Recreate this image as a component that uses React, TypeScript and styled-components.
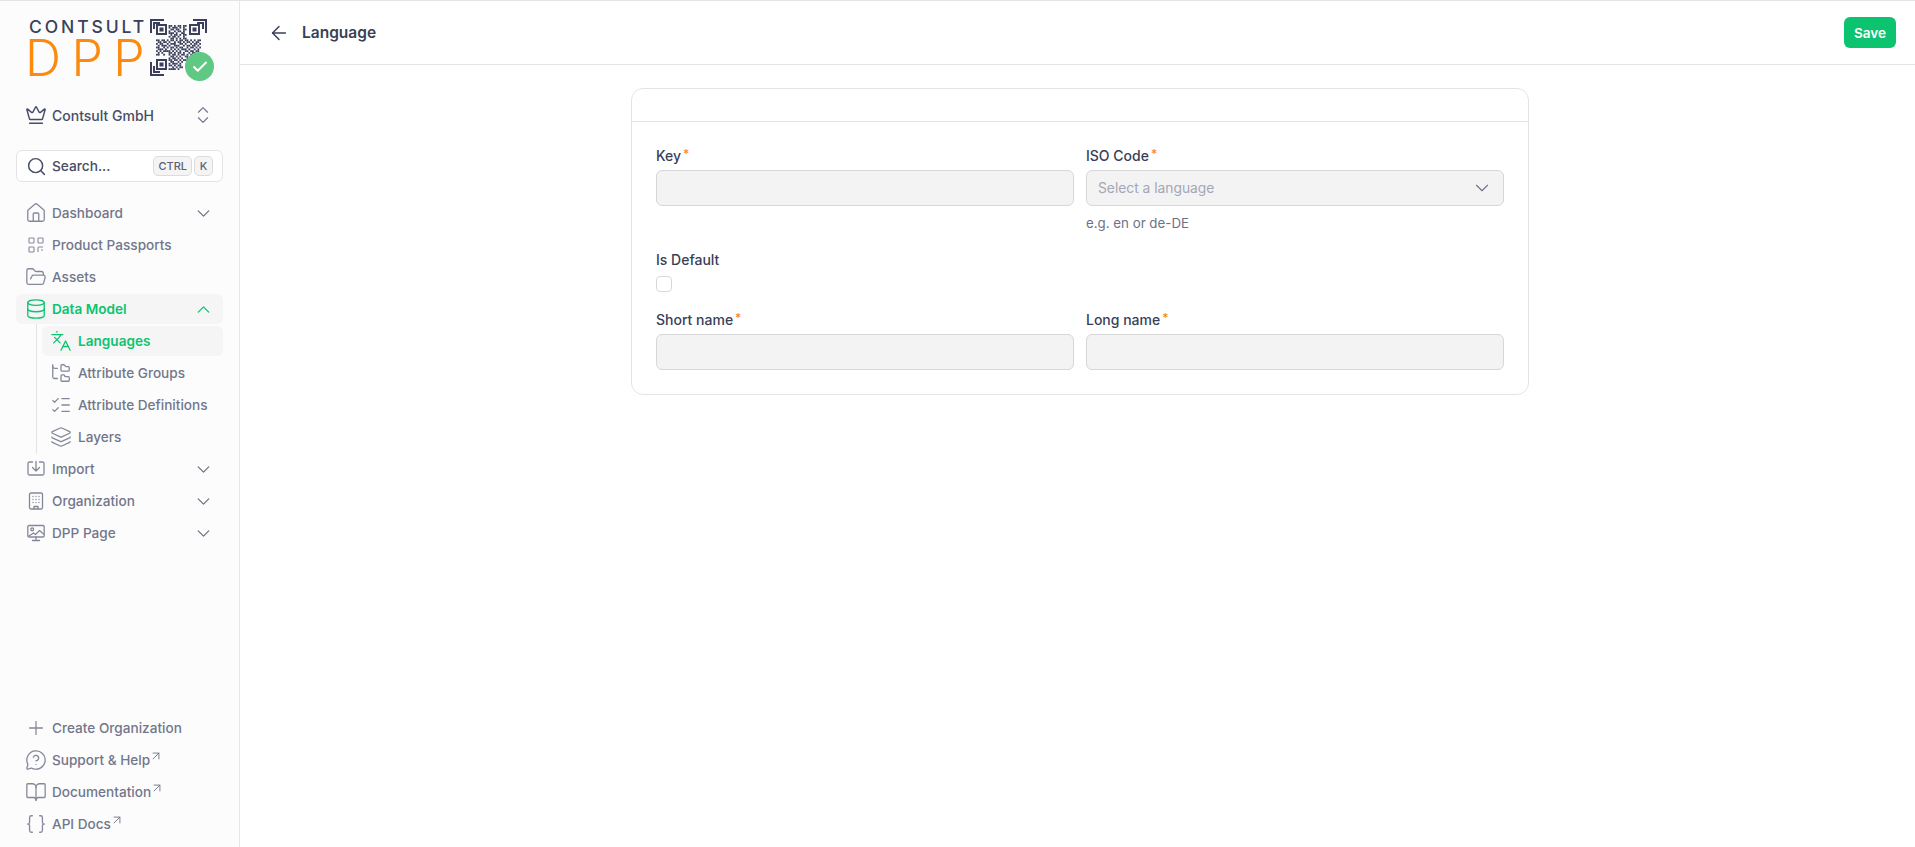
import React from 'react';
import styled, {createGlobalStyle} from 'styled-components';
import {
  ArrowLeft,
  ArrowUpRight,
  BookOpen,
  Braces,
  Check,
  ChevronDown,
  ChevronUp,
  ChevronsUpDown,
  Crown,
  Database,
  FolderOpen,
  FolderTree,
  House,
  Languages,
  Layers,
  ListChecks,
  MessageCircleQuestion,
  Plus,
  Search,
} from 'lucide-react';

const GlobalStyle = createGlobalStyle`
  html, body, #root {
    margin: 0;
    height: 100%;
  }
  body {
    font-family: 'Inter', 'Liberation Sans', sans-serif;
    color: #383f58;
    background: #fff;
  }
  * {
    box-sizing: border-box;
  }
`;

const Shell = styled.div`
  display: flex;
  height: 847px;
  border-top: 1px solid #e4e4e7;
  overflow: hidden;
`;

const Sidebar = styled.aside`
  width: 240px;
  flex-shrink: 0;
  display: flex;
  flex-direction: column;
  background: #fcfcfc;
  border-right: 1px solid #e6e6e8;
  padding: 0 16px;
`;

const Logo = styled.div`
  position: relative;
  display: flex;
  gap: 4px;
  height: 76px;
  margin: 18px 0 0 13px;
`;

const LogoWords = styled.div`
  display: flex;
  flex-direction: column;
  width: 117px;
`;

const LogoTop = styled.span`
  font-family: 'Inter', sans-serif;
  font-size: 17.5px;
  line-height: 16px;
  font-weight: 500;
  letter-spacing: 2.9px;
  color: #3b3f5c;
  white-space: nowrap;
`;

const LogoBottom = styled.span`
  margin-left: -4px;
  font-family: 'Inter', sans-serif;
  font-size: 50px;
  line-height: 47px;
  font-weight: 300;
  letter-spacing: 10.5px;
  color: #fb8a0f;
  white-space: nowrap;
`;

const Badge = styled.div`
  position: absolute;
  left: 156px;
  top: 33px;
  width: 29px;
  height: 29px;
  border-radius: 50%;
  background: #5fc883;
  color: #fff;
  display: flex;
  align-items: center;
  justify-content: center;
`;

// every icon sits in an 18px box, lucide glyphs are drawn a bit over it
const Ic = styled.span`
  width: 18px;
  height: 18px;
  flex-shrink: 0;
  display: flex;
  align-items: center;
  justify-content: center;

  svg {
    flex-shrink: 0;
  }
`;

const OrgRow = styled.div`
  display: flex;
  align-items: center;
  gap: 7px;
  height: 30px;
  margin-top: 5px;
  padding: 0 11px;
  font-size: 14px;
  font-weight: 500;
  color: #474d66;
`;

const Grow = styled.span`
  flex: 1;
`;

const SearchBox = styled.div`
  display: flex;
  align-items: center;
  gap: 7px;
  height: 32px;
  margin-top: 20px;
  padding: 0 9px 0 10px;
  border: 1px solid #e4e4e7;
  border-radius: 6px;
  background: #fff;
  font-size: 13.7px;
  font-weight: 500;
  color: #474d66;
`;

const Kbd = styled.kbd`
  height: 20px;
  min-width: 19px;
  padding: 0 4px;
  text-align: center;
  border: 1px solid #dcdce0;
  border-radius: 5px;
  background: #f4f4f5;
  font-family: 'Inter', sans-serif;
  font-size: 11px;
  line-height: 18px;
  font-weight: 500;
  color: #5b6074;

  & + & {
    margin-left: -5px;
  }
`;

const Nav = styled.nav`
  display: flex;
  flex-direction: column;
  gap: 2px;
  margin-top: 16px;
`;

const Spacer = styled.div`
  flex: 1;
`;

const Bottom = styled(Nav)`
  margin: 0 0 8px;
`;

const Item = styled.div<{$active?: boolean}>`
  display: flex;
  align-items: center;
  gap: 7px;
  height: 30px;
  flex-shrink: 0;
  padding: 0 11px;
  border-radius: 6px;
  font-size: 13.6px;
  font-weight: ${(p) => (p.$active ? 600 : 500)};
  color: ${(p) => (p.$active ? '#0cc36f' : '#72768b')};
  background: ${(p) => (p.$active ? '#f5f5f5' : 'transparent')};
  white-space: nowrap;

  ${Ic} {
    color: ${(p) => (p.$active ? '#0cc36f' : '#85889a')};
  }
`;

const SubList = styled.div`
  position: relative;
  display: flex;
  flex-direction: column;
  gap: 2px;
  margin-left: 20px;
  padding-left: 6px;

  &::before {
    content: '';
    position: absolute;
    left: 0;
    top: -2px;
    bottom: -2px;
    width: 1px;
    background: #e4e4e7;
  }

  ${Item} {
    padding: 0 9px 0 10px;
    gap: 8px;
  }
`;

const Up = styled(ArrowUpRight)`
  margin: -9px 0 0 -8px;
`;

const Main = styled.main`
  flex: 1;
  min-width: 0;
  display: flex;
  flex-direction: column;
`;

const Header = styled.header`
  display: flex;
  align-items: center;
  height: 64px;
  padding: 0 19px 0 30px;
  border-bottom: 1px solid #e4e4e7;
`;

const Title = styled.h1`
  margin: 0 0 0 14px;
  font-size: 15.5px;
  line-height: 20px;
  font-weight: 600;
  color: #383f58;
`;

const SaveButton = styled.button`
  width: 52px;
  height: 31px;
  padding: 0;
  border: none;
  border-radius: 6px;
  background: #0cc36f;
  color: #fff;
  font-family: inherit;
  font-size: 13.6px;
  font-weight: 600;
`;

const Card = styled.section`
  width: 898px;
  margin: 23px 0 0 391px;
  border: 1px solid #e4e4e7;
  border-radius: 12px;
  background: #fff;
`;

const CardHead = styled.div`
  height: 33px;
  border-bottom: 1px solid #e4e4e7;
`;

const Form = styled.div`
  display: grid;
  grid-template-columns: 418px 418px;
  column-gap: 12px;
  padding: 24px;
`;

const Field = styled.div<{$height: number}>`
  display: flex;
  flex-direction: column;
  height: ${(p) => p.$height}px;
`;

const Label = styled.label`
  height: 19px;
  margin-bottom: 5px;
  display: flex;
  font-size: 14px;
  line-height: 19px;
  font-weight: 500;
  color: #383f58;
`;

const Star = styled.span`
  margin-left: 2px;
  font-size: 12px;
  line-height: 15px;
  color: #fb8a0f;
`;

const Input = styled.div`
  height: 36px;
  flex-shrink: 0;
  display: flex;
  align-items: center;
  justify-content: space-between;
  padding: 0 12px 0 11px;
  border: 1px solid #d7d7da;
  border-radius: 6px;
  background: #f3f3f3;
  font-size: 13.8px;
  color: #a4a7b4;
`;

const Help = styled.div`
  margin-top: 8px;
  font-size: 13.3px;
  line-height: 18px;
  color: #6e7287;
`;

const CheckBox = styled.div`
  width: 16px;
  height: 16px;
  margin-top: 2px;
  border: 1px solid #d7d7da;
  border-radius: 4px;
  background: #fff;
`;

// qr modules, 1 = dark, drawn in a 25x25 grid between the corner frames
const qrRows = [
  '0000000110101101100000000',
  '0000000101110101000000000',
  '0000000011011001100000000',
  '0000000100101101000000000',
  '0000000111010011000000000',
  '0000000010110101100000000',
  '0000000101101001000000000',
  '0000000011010101100000000',
  '1101101011010110110101011',
  '0110110100101101011010110',
  '1011001011100110100101101',
  '0101110100111001011011010',
  '1100101011010110010110101',
  '0111010010101011101001010',
  '1010111101010100110110110',
  '0101000110101101001011001',
  '1100100101101011010100000',
  '0000000011010100110000000',
  '0000000101101010010000000',
  '0000000110110101100000000',
  '0000000011001010000000000',
  '0000000101110100000000000',
  '0000000110101100000000000',
  '0000000001010110000000000',
  '0000000111101000000000000',
];

const QrFinder = ({x, y}: {x: number; y: number}) => (
  <>
    <rect x={x + 7} y={y + 6} width={9} height={9} fill="none" stroke="#3b3f5c" strokeWidth="2" />
    <rect x={x + 9.5} y={y + 8.5} width={4} height={4} fill="#3b3f5c" />
  </>
);

const QrLogo = () => (
  <svg width="57" height="57" viewBox="0 0 57 57">
    <path
      d="M1 14V1h13M43 1h13v13M1 43v13h13M4 10V4h6M47 4h6v6M4 47v6h6"
      fill="none"
      stroke="#3b3f5c"
      strokeWidth="2"
    />
    <QrFinder x={0} y={0} />
    <QrFinder x={33} y={0} />
    <QrFinder x={0} y={35} />
    {qrRows.map((row, r) =>
      row.split('').map((cell, c) =>
        cell === '1' ? <rect key={`${r}-${c}`} x={6 + c * 1.8} y={6 + r * 1.8} width={1.8} height={1.8} fill="#3b3f5c" /> : null
      )
    )}
  </svg>
);

const ScanIcon = () => (
  <svg width="18" height="18" viewBox="0 0 18 18" fill="none" stroke="currentColor" strokeWidth="1.1">
    <rect x="2" y="2" width="5" height="5" rx="0.8" />
    <rect x="11" y="2" width="5" height="5" rx="0.8" />
    <rect x="2" y="11" width="5" height="5" rx="0.8" />
    <path d="M11 16v-4a1 1 0 0 1 1-1h4M14 14h2M16 16.4v.1M13.6 16.4v.1" />
  </svg>
);

const ImportIcon = () => (
  <svg width="18" height="18" viewBox="0 0 18 18" fill="none" stroke="currentColor" strokeWidth="1.3" strokeLinecap="round" strokeLinejoin="round">
    <path d="M5.500 2H2.500A1.500 1.500 0 0 0 1 3.500v10A1.500 1.500 0 0 0 2.500 15h13a1.500 1.500 0 0 0 1.500-1.500v-10A1.500 1.500 0 0 0 15.500 2h-3" />
    <path d="M9 1.500v9.500M5.500 7.500 9 11l3.500-3.500" />
  </svg>
);

const OfficeIcon = () => (
  <svg width="18" height="18" viewBox="0 0 18 18" fill="none" stroke="currentColor" strokeWidth="1.3" strokeLinecap="round" strokeLinejoin="round">
    <rect x="2.500" y="1" width="13" height="16" rx="1.500" />
    <path d="M7 17v-2.500h4V17" />
    <path d="M6 4.500h.01M9 4.500h.01M12 4.500h.01M6 7.500h.01M9 7.500h.01M12 7.500h.01M6 10.500h.01M9 10.500h.01M12 10.500h.01" />
  </svg>
);

const ScreenIcon = () => (
  <svg width="18" height="18" viewBox="0 0 18 18" fill="none" stroke="currentColor" strokeWidth="1.3" strokeLinecap="round" strokeLinejoin="round">
    <rect x="0.800" y="1.500" width="16.400" height="11.500" rx="1.200" />
    <circle cx="5.200" cy="5.400" r="1.400" />
    <path d="m2 12 4.500-3 2 1.500 4-4 4 3.500M9 13v3.500M5.500 16.500h7" />
  </svg>
);

const navIcon = {size: 22, strokeWidth: 1.4};
const chevron = {size: 21, strokeWidth: 1.5, color: '#6e7287'};
const outLink = {size: 14, strokeWidth: 1.6};

const App = () => {
  return (
    <Shell>
      <GlobalStyle />
      <Sidebar>
        <Logo>
          <LogoWords>
            <LogoTop>CONTSULT</LogoTop>
            <LogoBottom>DPP</LogoBottom>
          </LogoWords>
          <QrLogo />
          <Badge>
            <Check size={18} strokeWidth={2.6} />
          </Badge>
        </Logo>
        <OrgRow>
          <Ic>
            <Crown size={22} strokeWidth={1.6} />
          </Ic>
          <span>Contsult GmbH</span>
          <Grow />
          <Ic>
            <ChevronsUpDown size={22} strokeWidth={1.2} color="#6e7287" />
          </Ic>
        </OrgRow>
        <SearchBox>
          <Ic>
            <Search size={21} strokeWidth={1.7} />
          </Ic>
          <span>Search...</span>
          <Grow />
          <Kbd>CTRL</Kbd>
          <Kbd>K</Kbd>
        </SearchBox>
        <Nav>
          <Item>
            <Ic>
              <House {...navIcon} />
            </Ic>
            Dashboard
            <Grow />
            <Ic>
              <ChevronDown {...chevron} />
            </Ic>
          </Item>
          <Item>
            <Ic>
              <ScanIcon />
            </Ic>
            Product Passports
          </Item>
          <Item>
            <Ic>
              <FolderOpen {...navIcon} />
            </Ic>
            Assets
          </Item>
          <Item $active>
            <Ic>
              <Database {...navIcon} />
            </Ic>
            Data Model
            <Grow />
            <Ic>
              <ChevronUp {...chevron} color="#0cc36f" />
            </Ic>
          </Item>
          <SubList>
            <Item $active>
              <Ic>
                <Languages {...navIcon} />
              </Ic>
              Languages
            </Item>
            <Item>
              <Ic>
                <FolderTree {...navIcon} />
              </Ic>
              Attribute Groups
            </Item>
            <Item>
              <Ic>
                <ListChecks {...navIcon} />
              </Ic>
              Attribute Definitions
            </Item>
            <Item>
              <Ic>
                <Layers {...navIcon} />
              </Ic>
              Layers
            </Item>
          </SubList>
          <Item>
            <Ic>
              <ImportIcon />
            </Ic>
            Import
            <Grow />
            <Ic>
              <ChevronDown {...chevron} />
            </Ic>
          </Item>
          <Item>
            <Ic>
              <OfficeIcon />
            </Ic>
            Organization
            <Grow />
            <Ic>
              <ChevronDown {...chevron} />
            </Ic>
          </Item>
          <Item>
            <Ic>
              <ScreenIcon />
            </Ic>
            DPP Page
            <Grow />
            <Ic>
              <ChevronDown {...chevron} />
            </Ic>
          </Item>
        </Nav>
        <Spacer />
        <Bottom>
          <Item>
            <Ic>
              <Plus {...navIcon} />
            </Ic>
            Create Organization
          </Item>
          <Item>
            <Ic>
              <MessageCircleQuestion {...navIcon} />
            </Ic>
            Support &amp; Help
            <Up {...outLink} />
          </Item>
          <Item>
            <Ic>
              <BookOpen {...navIcon} />
            </Ic>
            Documentation
            <Up {...outLink} />
          </Item>
          <Item>
            <Ic>
              <Braces {...navIcon} />
            </Ic>
            API Docs
            <Up {...outLink} />
          </Item>
        </Bottom>
      </Sidebar>
      <Main>
        <Header>
          <Ic>
            <ArrowLeft size={22} strokeWidth={1.6} />
          </Ic>
          <Title>Language</Title>
          <Grow />
          <SaveButton>Save</SaveButton>
        </Header>
        <Card>
          <CardHead />
          <Form>
            <Field $height={104}>
              <Label>
                Key<Star>*</Star>
              </Label>
              <Input />
            </Field>
            <Field $height={104}>
              <Label>
                ISO Code<Star>*</Star>
              </Label>
              <Input>
                Select a language
                <Ic>
                  <ChevronDown size={22} strokeWidth={1.2} color="#6e7287" />
                </Ic>
              </Input>
              <Help>e.g. en or de-DE</Help>
            </Field>
            <Field $height={60}>
              <Label>Is Default</Label>
              <CheckBox />
            </Field>
            <div />
            <Field $height={60}>
              <Label>
                Short name<Star>*</Star>
              </Label>
              <Input />
            </Field>
            <Field $height={60}>
              <Label>
                Long name<Star>*</Star>
              </Label>
              <Input />
            </Field>
          </Form>
        </Card>
      </Main>
    </Shell>
  );
};

export default App;
